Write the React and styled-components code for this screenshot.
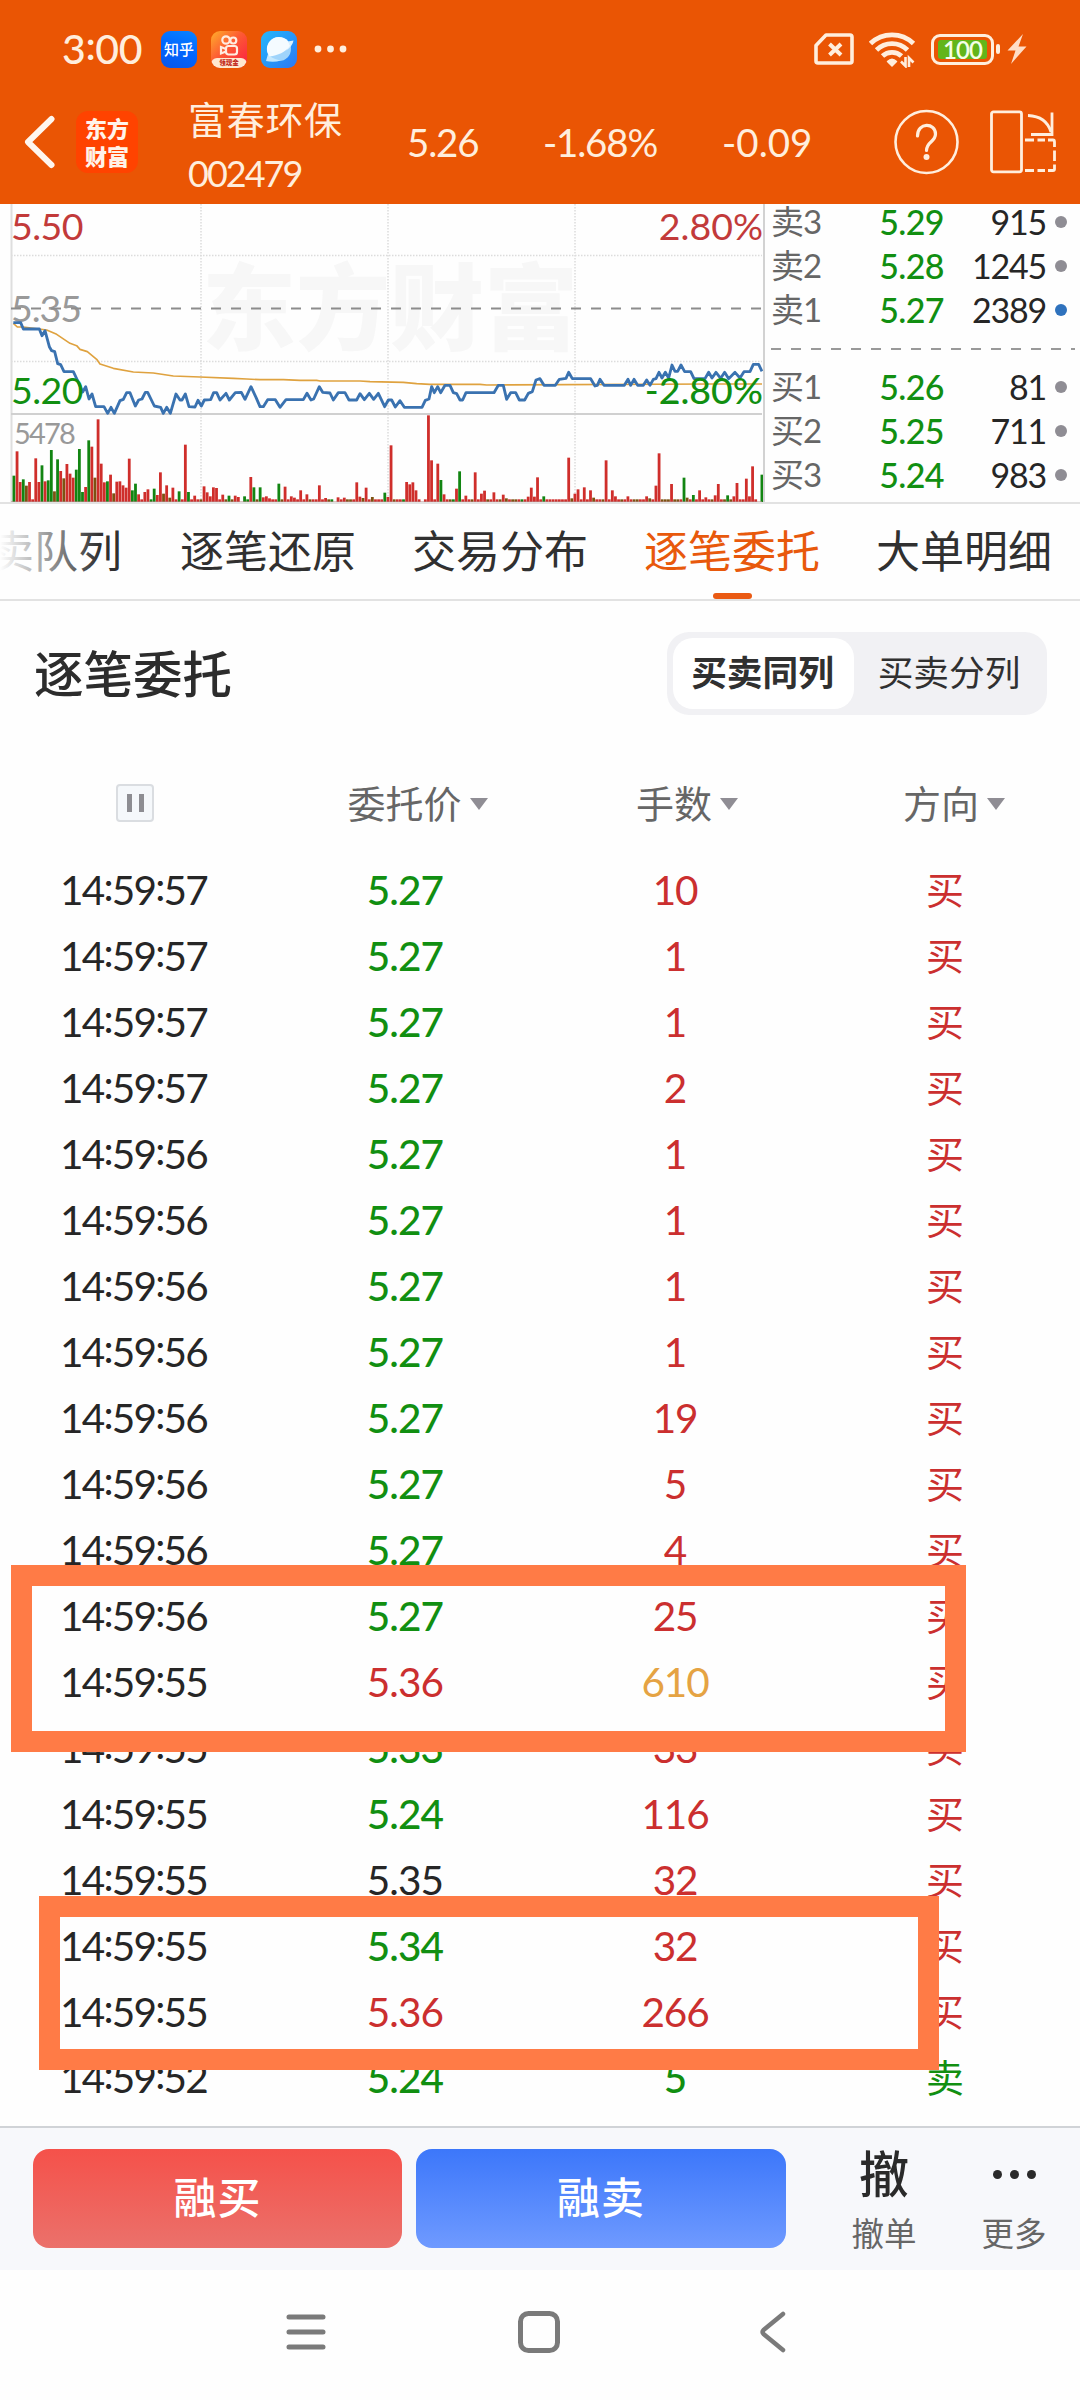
import React from "react";
import styled, { createGlobalStyle, css } from "styled-components";

const RED = "#cb2f2f";
const GREEN = "#118f11";
const INK = "#262626";
const AMBER = "#e5a343";
const CREAM = "#ffeedd";

const Global = createGlobalStyle`
  html, body { margin: 0; padding: 0; background: #fefefe; }
  body { font-family: Lato, "Noto Sans CJK SC", sans-serif; color: ${INK}; }
  * { box-sizing: border-box; }
`;

const Screen = styled.div`
  position: relative;
  width: 1080px;
  height: 2400px;
  overflow: hidden;
  display: flex;
  flex-direction: column;
  background: #fefefe;
`;

/* ---------- status bar and title bar ---------- */

const StatusBar = styled.div`
  height: 98px;
  flex: none;
  display: flex;
  align-items: center;
  background: #ea5504;
  color: ${CREAM};
  padding: 0 53px 0 62px;
`;

const Clock = styled.div`
  width: 99px;
  font-size: 41px;
  font-weight: 500;
  letter-spacing: -0.4px;
  line-height: 48px;
`;

const Colon = styled.span`
  vertical-align: 4px;
  line-height: 0;
`;

const AppIcons = styled.div`
  display: flex;
  align-items: center;
  gap: 14px;
  flex: 1;
`;

const ZhihuIcon = styled.div`
  width: 36px;
  height: 37px;
  border-radius: 9px;
  background: linear-gradient(20deg, #0a55e8, #0066ff 50%, #0a84ff);
  color: #fff;
  display: flex;
  align-items: center;
  justify-content: center;
  font-size: 15px;
  font-weight: 500;
  line-height: 1;
`;

const KuaishouIcon = styled.div`
  width: 36px;
  height: 37px;
  border-radius: 9px;
  overflow: hidden;
  background: linear-gradient(135deg, #ffae2b, #fd5a33 45%, #fb1d44);
  display: flex;
  flex-direction: column;
  align-items: center;
  justify-content: space-between;
  padding-top: 4px;
`;

const KuaishouTag = styled.div`
  width: 36px;
  height: 10px;
  background: #ffe9cf;
  border-radius: 6px 6px 0 0;
  color: #c22a1c;
  font-size: 6.5px;
  font-weight: 900;
  line-height: 10px;
  text-align: center;
`;

const StatusIcons = styled.div`
  display: flex;
  align-items: center;
`;

const BatteryShell = styled.div`
  width: 63px;
  height: 31px;
  margin-left: 15px;
  border: 3px solid ${CREAM};
  border-radius: 9px;
  padding: 3px 4px;
`;

const BatteryFill = styled.div`
  height: 19px;
  border-radius: 3px;
  background: #62b51a;
  color: #f4ffe6;
  font-size: 24px;
  font-weight: 600;
  line-height: 19px;
  letter-spacing: -1px;
  text-align: center;
`;

const BatteryNub = styled.div`
  width: 4px;
  height: 10px;
  border-radius: 2px;
  background: ${CREAM};
  margin: 0 7px 0 2px;
`;

const TitleBar = styled.div`
  height: 106px;
  flex: none;
  display: flex;
  align-items: flex-start;
  background: #ea5504;
  color: ${CREAM};
  padding-left: 23px;
`;

const BackButton = styled.div`
  width: 53px;
  height: 88px;
  display: flex;
  align-items: center;
`;

const BrandLogo = styled.div`
  width: 62px;
  height: 62px;
  margin-top: 13px;
  border-radius: 12px;
  background: #ff4300;
  color: #fff3ea;
  font-family: "Noto Sans CJK SC", sans-serif;
  font-weight: 900;
  font-size: 22px;
  line-height: 28px;
  padding: 2px 0;
  text-align: center;
`;

const StockName = styled.div`
  width: 219px;
  margin-left: 50px;
`;

const NameText = styled.div`
  font-size: 38px;
  letter-spacing: 0.7px;
  line-height: 42px;
  height: 46px;
`;

const CodeText = styled.div`
  font-size: 36px;
  letter-spacing: -2px;
  line-height: 44px;
  margin-top: 7px;
`;

const Quote = styled.div`
  width: ${(p) => p.$w}px;
  height: 88px;
  line-height: 88px;
  font-size: 38.5px;
  letter-spacing: ${(p) => p.$ls}px;
  white-space: nowrap;
`;

const HeaderIcons = styled.div`
  display: flex;
  align-items: center;
  gap: 31px;
  height: 88px;
`;

/* ---------- market panel ---------- */

const Market = styled.section`
  height: 300px;
  flex: none;
  display: flex;
  overflow: hidden;
  border-bottom: 2px solid #e2e2e2;
`;

const ChartPane = styled.div`
  width: 765px;
  height: 300px;
  border-right: 2px solid #d2d2d2;
  svg { display: block; }
`;

const Book = styled.div`
  flex: 1;
  margin-top: -4px;
  padding: 0 11px 0 6px;
`;

const BookRow = styled.div`
  display: grid;
  grid-template-columns: 80px 93px 1fr 23px;
  align-items: center;
  height: 44px;
  font-size: 34px;
  line-height: 43px;
  white-space: nowrap;
`;

const Side = styled.span`
  height: 44px;
  color: #666;
  font-size: 33px;
  letter-spacing: -1px;
`;

const BookPrice = styled.span`
  height: 44px;
  color: ${GREEN};
  font-weight: 500;
  letter-spacing: -0.6px;
  text-align: right;
`;

const BookVolume = styled.span`
  height: 44px;
  letter-spacing: -1.2px;
  text-align: right;
`;

const Dot = styled.i`
  width: 12px;
  height: 12px;
  border-radius: 50%;
  justify-self: end;
  margin-right: 2px;
  background: ${(p) => (p.$active ? "#2f72bd" : "#8f8d94")};
`;

const BookDivider = styled.div`
  height: 33px;
  display: flex;
  align-items: center;
  &::before {
    content: "";
    flex: 1;
    height: 2px;
    margin: 0 -6px 0 0;
    background: repeating-linear-gradient(90deg, #999 0 10px, transparent 10px 20px);
  }
`;

/* ---------- tabs ---------- */

const Tabs = styled.nav`
  position: relative;
  height: 97px;
  flex: none;
  display: flex;
  gap: 56px;
  border-bottom: 2px solid #e2e2e2;
  overflow: hidden;
  &::after {
    content: "";
    position: absolute;
    inset: 0 auto 0 0;
    width: 100px;
    background: linear-gradient(90deg, #fefefe 0%, rgba(254, 254, 254, 0));
  }
`;

const Tab = styled.div`
  flex: none;
  display: flex;
  flex-direction: column;
  align-items: center;
  justify-content: space-between;
  font-size: 44px;
  line-height: 94px;
  height: 95px;
  color: ${(p) => (p.$active ? "#e8590c" : "#303030")};
  &:first-child {
    margin-left: -54px;
    margin-right: 2px;
  }
`;

const TabLabel = styled.div`
  height: 89px;
`;

const TabMark = styled.div`
  width: 39px;
  height: 6px;
  border-radius: 3px;
  background: #ea5a13;
`;

/* ---------- section head ---------- */

const SectionHead = styled.div`
  height: 146px;
  flex: none;
  display: flex;
  align-items: center;
  justify-content: space-between;
  padding: 0 33px 1px 34px;
`;

const SectionTitle = styled.h2`
  margin: 0;
  font-size: 49.5px;
  font-weight: 500;
  line-height: 60px;
  color: #2c2c2c;
`;

const Segmented = styled.div`
  display: flex;
  width: 380px;
  height: 83px;
  padding: 6px;
  border-radius: 22px;
  background: #f1f1f4;
`;

const Segment = styled.div`
  flex: ${(p) => (p.$active ? "0 0 181px" : "1")};
  line-height: 69px;
  text-align: center;
  padding-left: ${(p) => (p.$active ? 0 : 3)}px;
  border-radius: 20px;
  font-size: 35.7px;
  color: #303030;
  ${(p) =>
    p.$active &&
    css`
      background: #fff;
      font-weight: 700;
      padding-right: 2px;
    `}
`;

/* ---------- order table ---------- */

const Columns = styled.div`
  display: grid;
  grid-template-columns: repeat(4, 270px);
  align-items: center;
  justify-items: center;
`;

const TableHead = styled(Columns)`
  height: 110px;
  padding-top: 1px;
  flex: none;
`;

const HeadCell = styled.div`
  display: flex;
  align-items: center;
  gap: 8px;
  padding-left: ${(p) => p.$shift}px;
  font-size: 38px;
  line-height: 46px;
  color: #666;
`;

const Caret = styled.i`
  margin-top: 3px;
  border: 9px solid transparent;
  border-bottom: 0;
  border-top: 12px solid #8f8d94;
`;

const PauseButton = styled.div`
  width: 38px;
  height: 38px;
  display: flex;
  align-items: center;
  justify-content: center;
  gap: 7px;
  border: 2px solid #dadde1;
  border-radius: 4px;
  background: #f5f8fb;
`;

const PauseBar = styled.i`
  width: 5px;
  height: 18px;
  background: #8d8d92;
`;

const TableBody = styled.div`
  height: 1269px;
  flex: none;
  overflow: hidden;
`;

const Row = styled(Columns)`
  height: 66px;
  line-height: 65px;
`;

const Cell = styled.div`
  color: ${(p) => p.$c};
  height: 66px;
  letter-spacing: ${(p) => p.$ls || 0}px;
  font-size: ${(p) => (p.$cjk ? 38 : 40.5)}px;
  line-height: ${(p) => (p.$cjk ? 64 : 65)}px;
  font-weight: ${(p) => (p.$c === GREEN && !p.$cjk ? 500 : 400)};
`;

const TimeCell = styled(Cell)`
  padding-right: 3px;
`;

/* ---------- bottom bars ---------- */

const ActionBar = styled.div`
  height: 144px;
  flex: none;
  display: flex;
  align-items: flex-start;
  padding: 21px 0 0 33px;
  background: #f7f8fb;
  border-top: 2px solid #d0d3d7;
`;

const TradeButton = styled.div`
  width: ${(p) => (p.$buy ? 369 : 370)}px;
  height: 99px;
  margin-right: ${(p) => (p.$buy ? 14 : 13)}px;
  border-radius: 16px;
  background: ${(p) =>
    p.$buy
      ? "linear-gradient(#f5514a, #eb716b)"
      : "linear-gradient(#3c77fa, #6f9aff)"};
  color: #fff;
  font-size: 43px;
  letter-spacing: 1px;
  font-weight: 500;
  line-height: 98px;
  text-align: center;
`;

const Tool = styled.div`
  width: 130px;
  margin-left: ${(p) => p.$ml}px;
  display: flex;
  flex-direction: column;
  align-items: center;
`;

const ToolIcon = styled.div`
  height: 50px;
  display: flex;
  align-items: center;
  gap: 8px;
  font-size: 50px;
  font-weight: 500;
  line-height: 50px;
  color: #2a2a2a;
`;

const ToolDot = styled.i`
  width: 9px;
  height: 9px;
  border-radius: 50%;
  background: #2a2a2a;
`;

const ToolLabel = styled.div`
  margin-top: 17px;
  font-size: 32.5px;
  line-height: 36px;
  color: #666;
`;

const SystemNav = styled.div`
  height: 130px;
  flex: none;
  display: flex;
  padding: 40px 0 0 284px;
  svg { margin-right: 189px; }
  svg + svg { margin-right: 197px; }
`;

const Marker = styled.div`
  position: absolute;
  left: ${(p) => p.$x}px;
  top: ${(p) => p.$y}px;
  width: ${(p) => p.$w}px;
  height: ${(p) => p.$h}px;
  border: 21px solid #ff7b46;
`;

/* ---------- data ---------- */

const VOLUME =
  "g79 r152 r60 g68 b49 r60 r8 r131 r60 g110 r62 g65 g156 b32 g128 r93 b71 r114 r85 r73 g97 g159 g30 r45 g185 r166 b73 r248 r115 r59 g62 r82 b26 r61 r62 r50 r43 r130 g35 g55 r23 r8 r30 r38 g8 g40 r21 r89 b25 r50 b13 r43 r8 g32 r8 r172 g30 r8 r19 r8 b8 r47 r29 r17 r44 r42 r8 r22 b8 g19 b8 r19 r15 n0 g17 g8 r75 g44 b8 g44 r14 r17 r11 r8 r8 g55 b8 r46 r8 r17 r13 r8 r35 r8 r23 b8 r8 r8 r50 r8 r12 b8 g8 n0 r14 r8 r13 b8 b8 r8 r59 r16 b12 r43 r8 b15 r8 r8 r8 g28 r15 r170 b8 r8 r8 g8 r60 r53 r59 r35 r8 n0 r8 r260 r125 r8 r115 g66 r23 r8 b8 g8 r40 g92 r8 r19 r8 b8 r89 r8 r25 r34 b8 r8 r29 r8 b8 r22 b11 r8 b8 b8 r8 g8 r8 r16 r43 r16 r74 r8 g17 r8 r8 r8 r8 r8 r8 r8 r133 b11 r25 r38 r8 r44 r8 r35 b13 r8 r8 b8 r125 r8 r35 r17 r8 b8 r8 r17 r8 b8 b8 r8 r8 r17 b11 r8 r49 r146 b8 b8 b8 r54 b8 b8 r8 g73 b13 r8 g21 r8 r35 r8 r14 r8 b8 r20 r54 r8 b8 g20 b8 r17 r57 r8 r8 r70 r17 r107 r8 n0 g82"
    .split(" ")
    .map((v) => ({ tone: v[0], size: Number(v.slice(1)) }));

const BAR_TONES = { r: "#cf2e2b", g: "#128512", b: "#7c5212", n: "none" };

const PRICE_LINE =
  "40,368 62,368 70,387 118,387 126,407 135,392 148,440 155,452 164,455 173,491 182,494 192,515 220,515 232,540 248,576 257,560 267,597 276,582 287,620 312,620 323,640 333,622 343,640 360,602 370,598 380,578 390,578 406,618 416,600 426,597 436,577 443,577 463,618 482,622 490,640 500,622 511,640 528,582 540,600 546,600 556,582 567,620 585,621 594,601 604,618 613,600 632,599 641,578 650,578 660,600 678,580 688,600 706,578 724,577 735,598 753,560 768,592 780,620 790,620 803,599 826,599 840,622 858,599 910,599 921,580 933,600 941,597 958,560 968,577 990,579 1000,600 1015,578 1035,578 1047,600 1070,600 1080,581 1093,599 1108,580 1121,598 1135,580 1154,620 1165,600 1175,600 1186,621 1200,602 1213,622 1266,622 1276,601 1287,597 1295,560 1303,578 1313,560 1322,578 1335,556 1350,556 1360,578 1370,581 1380,600 1388,600 1398,578 1482,578 1495,556 1510,556 1520,598 1532,578 1547,578 1558,600 1574,600 1585,580 1597,575 1608,540 1620,536 1632,556 1666,556 1678,538 1698,535 1706,517 1717,536 1772,536 1785,558 1792,556 1800,538 1812,556 1873,556 1884,538 1892,556 1902,538 1913,556 1930,556 1940,540 1950,556 1960,538 1968,536 1977,517 1986,534 1996,517 2006,534 2016,495 2025,514 2033,514 2043,495 2054,515 2072,515 2082,536 2115,536 2126,517 2136,534 2148,517 2162,535 2174,517 2186,536 2205,517 2220,534 2232,515 2250,515 2260,493 2276,493 2286,514";

const AVERAGE_LINE =
  "40,370 52,381 70,381 140,390 170,403 210,430 230,437 240,448 262,455 290,478 300,492 340,505 400,516 460,519 520,528 600,531 700,535 740,537 780,539 850,539 900,541 950,541 960,543 1080,543 1110,545 1210,547 1250,551 1290,553 1440,553 1460,555 2140,552 2286,552";

const BOOK = [
  ["卖3", "5.29", "915"],
  ["卖2", "5.28", "1245"],
  ["卖1", "5.27", "2389", true],
  null,
  ["买1", "5.26", "81"],
  ["买2", "5.25", "711"],
  ["买3", "5.24", "983"],
];

const ORDERS = [
  ["57", "5.27", "10"],
  ["57", "5.27", "1"],
  ["57", "5.27", "1"],
  ["57", "5.27", "2"],
  ["56", "5.27", "1"],
  ["56", "5.27", "1"],
  ["56", "5.27", "1"],
  ["56", "5.27", "1"],
  ["56", "5.27", "19"],
  ["56", "5.27", "5"],
  ["56", "5.27", "4"],
  ["56", "5.27", "25"],
  ["55", "5.36", "610", RED, AMBER],
  ["55", "5.33", "33"],
  ["55", "5.24", "116"],
  ["55", "5.35", "32", INK],
  ["55", "5.34", "32"],
  ["55", "5.36", "266", RED],
  ["52", "5.24", "5", GREEN, GREEN, "卖"],
  [null, "", "", GREEN, GREEN, "卖"],
];

const TABS = ["买卖队列", "逐笔还原", "交易分布", "逐笔委托", "大单明细"];

/* ---------- drawings ---------- */

const PlanetIcon = () => (
  <svg width="36" height="37" viewBox="0 0 36 37">
    <defs>
      <linearGradient id="planet" x1="0" y1="0" x2="1" y2="1">
        <stop offset="0" stopColor="#25b7fb" />
        <stop offset="1" stopColor="#2b78f5" />
      </linearGradient>
    </defs>
    <rect width="36" height="37" rx="9" fill="url(#planet)" />
    <circle cx="18" cy="18" r="12" fill="#9fd4fb" />
    <path d="M5 30 L7 23 C10 27 16 29 20 29.500 C15 31 10 31 5 30Z" fill="#c4e8fd" />
    <path d="M8.500 25.500 A12 12 0 1 1 29.500 15 C24 21 17 24.500 8.500 25.500Z" fill="#f4fbff" />
    <path d="M27 10.500 L32.500 9.500 C32 13 29 17 25 20 L29 15Z" fill="#d9f1ff" />
  </svg>
);

const CameraMark = () => (
  <svg width="20" height="21" viewBox="0 0 20 21" fill="none" stroke="#ffece0" strokeWidth="2.200">
    <circle cx="7" cy="5" r="3.700" />
    <circle cx="14.300" cy="5.500" r="3" />
    <rect x="7" y="11" width="11" height="8.500" rx="2.500" />
    <path d="M7 14 L2 12 V18.500 L7 16.500" />
  </svg>
);

const SimIcon = () => (
  <svg width="40" height="32" viewBox="0 0 40 32" fill="none" stroke={CREAM}>
    <path d="M12 2 H36 Q38 2 38 4 V28 Q38 30 36 30 H4 Q2 30 2 28 V12.500 Z" strokeWidth="3.600" strokeLinejoin="round" />
    <path d="M15.500 11 L27 22 M27 11 L15.500 22" strokeWidth="4" />
  </svg>
);

const WifiIcon = () => (
  <svg width="47" height="37" viewBox="0 0 47 37" style={{ marginLeft: 15 }}>
    <g fill="none" stroke={CREAM} strokeWidth="4.800">
      <path d="M1.500 12.500 A31 31 0 0 1 44.500 12.500" />
      <path d="M7.500 19 A22 22 0 0 1 38.500 19" />
      <path d="M13.500 25 A14 14 0 0 1 32.500 25" />
    </g>
    <path d="M23 35 L18.500 30.500 Q23 26 27.500 30.500Z" fill={CREAM} stroke={CREAM} strokeLinejoin="round" strokeWidth="1.500" />
    <path d="M36.500 26 V35 L32 30.500 M40 36 V27 L44.500 31.500" fill="none" stroke={CREAM} strokeWidth="2.600" />
  </svg>
);

const BoltIcon = () => (
  <svg width="20" height="30" viewBox="0 0 20 30">
    <path d="M16 0 L0.500 16.500 H8.500 L4 30 L19.500 12.500 H11.500Z" fill="#ffddc6" />
  </svg>
);

const HelpIcon = () => (
  <svg width="65" height="66" viewBox="0 0 65 66" fill="none" stroke={CREAM}>
    <circle cx="32.500" cy="33" r="31" strokeWidth="2.600" />
    <path d="M23.500 27 C23.500 13 41.500 13.500 41.500 25 C41.500 33 32.500 32.500 32.500 41.500" strokeWidth="3.200" strokeLinecap="round" />
    <circle cx="32.500" cy="48" r="3" fill={CREAM} stroke="none" />
  </svg>
);

const RotateIcon = () => (
  <svg width="67" height="64" viewBox="0 0 67 64" fill="none" stroke={CREAM} strokeWidth="2.800">
    <rect x="1.500" y="1.800" width="30" height="60" rx="2" />
    <path d="M38 5.500 C50 6 58 12 61 22" />
    <path d="M62 2.500 V24.500 H41" strokeWidth="2.800" />
    <path d="M35 30 H44 M47.500 30 H55 M58 30 H63 Q64.500 30 64.500 32 V37 M64.500 40.500 V51 M64.500 54.500 V59 Q64.500 60.500 63 60.500 H58 M55 60.500 H47.500 M44 60.500 H35" />
  </svg>
);

const ChartDrawing = () => (
  <svg width="763" height="300" viewBox="0 204 763 300" fontFamily='Lato, "Noto Sans CJK SC", sans-serif'>
    <text x="202" y="343" fontSize="94" fontWeight="900" fill="#f7f7f7" fontFamily='"Noto Sans CJK SC", sans-serif'>
      东方财富
    </text>
    <g stroke="#dcdcdc" strokeWidth="1.500" strokeDasharray="1.500 1.500">
      <path d="M11 255.500H762 M11 361.500H762" />
      <path d="M201 204V502 M388 204V502 M575 204V502" />
    </g>
    <path d="M11.500 204V503" stroke="#dedede" strokeWidth="2" />
    <path d="M11 414H762" stroke="#d0d0d0" strokeWidth="2" />
    <text x="11" y="321.500" fontSize="37.500" fill="#999" letterSpacing="-1">5.35</text>
    <path d="M11 308.500H762" stroke="#8c8c8c" strokeWidth="2.200" strokeDasharray="10 10" />
    <g transform="translate(0 200) scale(0.33333)">
      {VOLUME.map((bar, i) => (
        <rect key={i} x={37.6 + i * 9.35} y={906 - bar.size} width="8.400" height={bar.size} fill={BAR_TONES[bar.tone]} />
      ))}
      <path d="M33 906H2286" stroke="#b98a8a" strokeWidth="3" />
      <g fill="none" strokeLinejoin="round">
        <polyline points={AVERAGE_LINE} stroke="#dfa23f" strokeWidth="5" />
        <polyline points={PRICE_LINE} stroke="#3a72b0" strokeWidth="8.500" />
      </g>
    </g>
    <g fontSize="37.500">
      <text x="11" y="240" fill="#c23a3a" letterSpacing="-0.500">5.50</text>
      <text x="11" y="403.500" fill={GREEN} letterSpacing="-0.500">5.20</text>
      <g textAnchor="end">
        <text x="763" y="240" fill="#c23a3a">2.80%</text>
        <text x="763" y="403.500" fill={GREEN} fontWeight="500">-2.80%</text>
      </g>
    </g>
    <text x="14" y="444" fontSize="29" fill="#999" letterSpacing="-1.800">5478</text>
  </svg>
);

export default function App() {
  return (
    <Screen>
      <Global />
      <StatusBar>
        <Clock>3<Colon>:</Colon>00</Clock>
        <AppIcons>
          <ZhihuIcon>知乎</ZhihuIcon>
          <KuaishouIcon>
            <CameraMark />
            <KuaishouTag>领现金</KuaishouTag>
          </KuaishouIcon>
          <PlanetIcon />
          <svg width="40" height="8" style={{ marginLeft: 3 }} fill={CREAM}>
            <circle cx="4" cy="4" r="3.400" />
            <circle cx="16.500" cy="4" r="3.400" />
            <circle cx="29" cy="4" r="3.400" />
          </svg>
        </AppIcons>
        <StatusIcons>
          <SimIcon />
          <WifiIcon />
          <BatteryShell>
            <BatteryFill>100</BatteryFill>
          </BatteryShell>
          <BatteryNub />
          <BoltIcon />
        </StatusIcons>
      </StatusBar>

      <TitleBar>
        <BackButton>
          <svg width="34" height="54" viewBox="0 0 34 54" fill="none" stroke="#fff6ee" strokeWidth="6" strokeLinecap="round" strokeLinejoin="round">
            <path d="M28.500 4 L5 27 L28.500 50" />
          </svg>
        </BackButton>
        <BrandLogo>
          东方
          <br />
          财富
        </BrandLogo>
        <StockName>
          <NameText>富春环保</NameText>
          <CodeText>002479</CodeText>
        </StockName>
        <Quote $w={136} $ls={-1.2}>5.26</Quote>
        <Quote $w={179} $ls={-1.2}>-1.68%</Quote>
        <Quote $w={172} $ls={0}>-0.09</Quote>
        <HeaderIcons>
          <HelpIcon />
          <RotateIcon />
        </HeaderIcons>
      </TitleBar>

      <Market>
        <ChartPane>
          <ChartDrawing />
        </ChartPane>
        <Book>
          {BOOK.map((r, i) =>
            r ? (
              <BookRow key={i}>
                <Side>{r[0]}</Side>
                <BookPrice>{r[1]}</BookPrice>
                <BookVolume>{r[2]}</BookVolume>
                <Dot $active={r[3]} />
              </BookRow>
            ) : (
              <BookDivider key={i} />
            )
          )}
        </Book>
      </Market>

      <Tabs>
        {TABS.map((t) => (
          <Tab key={t} $active={t === "逐笔委托"}>
            <TabLabel>{t}</TabLabel>
            {t === "逐笔委托" && <TabMark />}
          </Tab>
        ))}
      </Tabs>

      <SectionHead>
        <SectionTitle>逐笔委托</SectionTitle>
        <Segmented>
          <Segment $active>买卖同列</Segment>
          <Segment>买卖分列</Segment>
        </Segmented>
      </SectionHead>

      <TableHead>
        <PauseButton>
          <PauseBar />
          <PauseBar />
        </PauseButton>
        <HeadCell $shift={25}>委托价<Caret /></HeadCell>
        <HeadCell $shift={24}>手数<Caret /></HeadCell>
        <HeadCell $shift={18}>方向<Caret /></HeadCell>
      </TableHead>

      <TableBody>
        {ORDERS.map(([sec, price, lots, priceTone = GREEN, lotTone = RED, side = "买"], i) => (
          <Row key={i}>
            <TimeCell $c={INK} $ls={-1.8}>
              {sec && (
                <>
                  14<Colon>:</Colon>59<Colon>:</Colon>{sec}
                </>
              )}
            </TimeCell>
            <Cell $c={priceTone} $ls={-0.9}>{price}</Cell>
            <Cell $c={lotTone} $ls={-1.2}>{lots}</Cell>
            <Cell $c={side === "卖" ? GREEN : RED} $cjk>{side}</Cell>
          </Row>
        ))}
      </TableBody>

      <ActionBar>
        <TradeButton $buy>融买</TradeButton>
        <TradeButton>融卖</TradeButton>
        <Tool $ml={20}>
          <ToolIcon>撤</ToolIcon>
          <ToolLabel>撤单</ToolLabel>
        </Tool>
        <Tool $ml={0}>
          <ToolIcon>
            <ToolDot />
            <ToolDot />
            <ToolDot />
          </ToolIcon>
          <ToolLabel>更多</ToolLabel>
        </Tool>
      </ActionBar>

      <SystemNav>
        <svg width="44" height="44" viewBox="0 0 44 44" stroke="#7a7a7a" strokeWidth="5" strokeLinecap="round">
          <path d="M5 7H39 M5 22H39 M5 37H39" />
        </svg>
        <svg width="44" height="44" viewBox="0 0 44 44" fill="none" stroke="#7a7a7a" strokeWidth="5">
          <rect x="3.500" y="3.500" width="37" height="37" rx="8" />
        </svg>
        <svg width="30" height="44" viewBox="0 0 30 44" fill="none" stroke="#7a7a7a" strokeWidth="4.500" strokeLinecap="round" strokeLinejoin="round">
          <path d="M25 4 L5.500 20 Q3.500 22 5.500 24 L25 40" />
        </svg>
      </SystemNav>

      <Marker $x={10.5} $y={1565} $w={955.5} $h={187} />
      <Marker $x={39} $y={1896} $w={900} $h={174} />
    </Screen>
  );
}
